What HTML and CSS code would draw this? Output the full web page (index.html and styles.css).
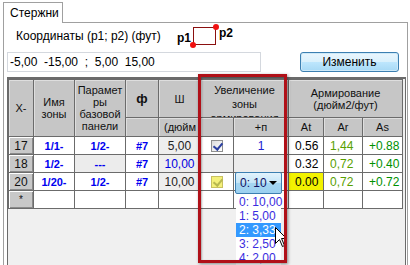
FILE: index.html
```html
<!DOCTYPE html>
<html>
<head>
<meta charset="utf-8">
<link rel="stylesheet" href="styles.css">
</head>
<body>
<div class="tabs"><div class="tab">Стержни</div></div>
<div class="panel">
  <div class="coords">
    <span class="coords-label">Координаты (p1; p2) (фут)</span>
    <div class="pts">
      <span class="p1">p1</span>
      <span class="pbox"><i class="dot dot-bl"></i><i class="dot dot-tr"></i></span>
      <span class="p2">p2</span>
    </div>
  </div>
  <div class="inputrow">
    <div class="field">-5,00&nbsp; -15,00&nbsp; ;&nbsp; 5,00&nbsp; 15,00</div>
    <button class="btn">Изменить</button>
  </div>
  <div class="grid">
    <table class="dg">
      <colgroup>
        <col class="c-rh"><col class="c-name"><col class="c-param"><col class="c-phi"><col class="c-sh">
        <col class="c-chk"><col class="c-plus"><col class="c-at"><col class="c-ar"><col class="c-as">
      </colgroup>
      <tr class="h1">
        <th rowspan="2">X-</th>
        <th rowspan="2">Имя<br>зоны</th>
        <th rowspan="2">Парамет<wbr>ры базовой панели</th>
        <th class="phi">ф</th>
        <th>Ш</th>
        <th colspan="2"><div class="clipbox">Увеличение зоны армирования</div></th>
        <th colspan="3">Армирование<br>(дюйм2/фут)</th>
      </tr>
      <tr class="h2">
        <th></th>
        <th class="cut">(дюйм</th>
        <th></th>
        <th>+п</th>
        <th>At</th>
        <th>Ar</th>
        <th>As</th>
      </tr>
      <tr class="row">
        <th class="rh">17</th>
        <td class="b">1/1-</td>
        <td class="b">1/2-</td>
        <td class="b">#7</td>
        <td class="sh">5,00</td>
        <td class="chk"><span class="cb on"></span></td>
        <td class="num">1</td>
        <td class="v">0.56</td>
        <td class="v ar">1,44</td>
        <td class="v as">+0.88</td>
      </tr>
      <tr class="row">
        <th class="rh">18</th>
        <td class="b">1/2-</td>
        <td class="b ro">---</td>
        <td class="b">#7</td>
        <td class="sh blue">10,00</td>
        <td class="ro"></td>
        <td class="ro"></td>
        <td class="v">0.32</td>
        <td class="v ar">0,72</td>
        <td class="v as">+0.40</td>
      </tr>
      <tr class="row">
        <th class="rh">20</th>
        <td class="b">1/20-</td>
        <td class="b">1/2-</td>
        <td class="b">#7</td>
        <td class="sh">10,00</td>
        <td class="chk"><span class="cb hl"></span></td>
        <td></td>
        <td class="v yel">0.00</td>
        <td class="v ar">0,72</td>
        <td class="v as">+0.72</td>
      </tr>
      <tr class="row">
        <th class="rh star">*</th>
        <td></td><td></td><td></td><td></td><td></td><td></td><td></td><td></td><td></td>
      </tr>
    </table>

    <div class="combo"><span>0: 10</span><i class="arrow"></i></div>
    <ul class="list">
      <li>0: 10,00</li>
      <li>1: 5,00</li>
      <li class="sel">2: 3,33</li>
      <li>3: 2,50</li>
      <li>4: 2,00</li>
    </ul>
    <svg class="cursor" width="13" height="21" viewBox="0 0 13 21"><path d="M0.5 0.5 L0.5 16.5 L4.5 12.5 L7.5 19.5 L9.5 18.5 L6.5 11.5 L11.5 11.5 Z" fill="#fff" stroke="#000" stroke-width="1"/></svg>
    <div class="redbox"></div>
  </div>
</div>
</body>
</html>
```

FILE: styles.css
```css
* { box-sizing: border-box; margin: 0; padding: 0; }
html, body { width: 410px; height: 265px; overflow: hidden; background: #fff; }
body { font-family: "Liberation Sans", Arial, sans-serif; font-size: 12px; color: #000; }

.tabs { display: flex; padding: 2px 0 0 3px; height: 23px; position: relative; z-index: 2; margin-bottom: -1px; }
.tab { width: 60px; height: 21px; border: 1px solid #a0a0a0; border-bottom: none; background: #fff; padding: 3px 0 0 6px; font-size: 12px; }

.panel { margin-left: 3px; width: 405px; height: 260px; border: 1px solid #a0a0a0; background: #fff; }

.coords { display: flex; align-items: center; height: 26px; padding-left: 12px; }
.coords-label { width: 161px; }
.pts { display: flex; align-items: flex-start; height: 26px; }
.p1, .p2 { font-weight: bold; font-size: 12px; line-height: 14px; }
.p1 { margin-top: 8px; margin-right: 2px; }
.p2 { margin-top: 3px; margin-left: 3px; }
.pbox { position: relative; display: block; width: 23px; height: 18px; margin-top: 4px; border: 1px solid #8b1010; }
.dot { position: absolute; width: 6px; height: 6px; border-radius: 50%; background: #f01010; }
.dot-bl { left: -4px; bottom: -4px; }
.dot-tr { right: -4px; top: -4px; }

.inputrow { display: flex; margin-top: 3px; padding-left: 3px; height: 20px; }
.field { width: 254px; height: 20px; border: 1px solid #d4d8de; padding: 2px 0 0 2px; font-size: 12px; white-space: pre; }
.btn { margin-left: 39px; width: 99px; height: 20px; border: 1px solid #3c7fb1; border-radius: 3px; background: linear-gradient(#eaf6fd, #d9f0fc 50%, #bee6fd 50%, #a7d9f5); font-family: "Liberation Sans", Arial, sans-serif; font-size: 12px; color: #000; box-shadow: inset 0 0 0 1px #cde9f8; }

.grid { position: relative; margin: 5px 0 0 3px; width: 399px; height: 200px; border: 1px solid #6b6b6b; border-top-width: 2px; background: #f0f0f0; }

.dg { border-collapse: collapse; table-layout: fixed; width: 394px; font-size: 11px; }
.c-rh { width: 25px; } .c-name { width: 41px; } .c-param { width: 51px; } .c-phi { width: 33px; } .c-sh { width: 42px; }
.c-chk { width: 33px; } .c-plus { width: 55px; } .c-at { width: 35px; } .c-ar { width: 39px; } .c-as { width: 40px; }

.dg th, .dg td { border: 1px solid #6b6b6b; padding: 0; overflow: hidden; white-space: nowrap; }
.dg th { background: #c6c6c6; font-weight: normal; text-align: center; vertical-align: middle; line-height: 12px; white-space: normal; box-shadow: inset 1px 1px 0 #dedede; color: #111; }
.h1 th { height: 38px; }
.h2 th { height: 19px; }
.h1 th[rowspan] { font-size: 11px; }
.dg .phi { font-weight: bold; font-size: 13px; }
.clipbox { height: 37px; padding-top: 3px; line-height: 14px; overflow: hidden; }
.dg .cut { text-align: left; padding-left: 5px; white-space: nowrap; }

.row td, .row th { height: 18px; }
.dg .rh { background: #c8c8c8; box-shadow: inset 1px 1px 0 #fff, inset -1px -1px 0 #8a8a8a; font-size: 12px; }
.dg .star { font-size: 10px; }
.dg td { background: #fff; text-align: center; vertical-align: middle; }
.dg td.b { font-weight: bold; color: #0000f0; }
.dg td.sh { background: #eeeeee; color: #222; font-size: 12px; }
.dg td.blue { color: #0000e0; }
.dg td.ro { background: #ececec; }
.dg td.num { color: #2020d0; font-size: 12px; }
.dg td.v { text-align: left; padding-left: 6px; font-size: 12px; }
.dg td.ar { color: #58a000; }
.dg td.as { color: #009000; }
.dg td.yel { background: #f2f200; }

.cb { display: inline-block; width: 12px; height: 12px; border: 1px solid #8e8f8f; vertical-align: middle; position: relative; background: linear-gradient(135deg, #dcdcdc, #fff); }
.cb::after { content: ""; position: absolute; left: 3px; top: 0px; width: 4px; height: 7px; border: solid #2a3fa0; border-width: 0 2px 2px 0; transform: rotate(40deg); }
.cb.hl { background: #f4f07a; border-color: #c8c060; }
.cb.hl::after { border-color: #b8b850; }

.combo { position: absolute; left: 227px; top: 93px; width: 47px; height: 22px; border: 1px solid #3c7fb1; border-radius: 2px; background: linear-gradient(#e3f3fc, #c4e5f7 50%, #a5d5f2 50%, #9bd0f0); display: flex; align-items: center; padding-left: 4px; font-size: 12px; color: #101060; white-space: nowrap; }
.combo span { flex: 1; white-space: nowrap; }
.arrow { width: 0; height: 0; border-left: 4px solid transparent; border-right: 4px solid transparent; border-top: 4px solid #000; margin-right: 4px; flex: none; }

.list { position: absolute; left: 228px; top: 116px; width: 45px; height: 80px; list-style: none; background: #fff; font-size: 12px; color: #3a2ce0; }
.list li { height: 14px; line-height: 14px; padding-left: 3px; white-space: nowrap; }
.list li.sel { background: #3399ff; color: #fff; }

.cursor { position: absolute; left: 267px; top: 148px; }
.redbox { position: absolute; left: 190px; top: -5px; width: 89px; height: 189px; border: 3px solid #b01018; box-shadow: 1px 1px 3px rgba(0,0,0,0.45), inset 1px 1px 2px rgba(0,0,0,0.3); }
```
